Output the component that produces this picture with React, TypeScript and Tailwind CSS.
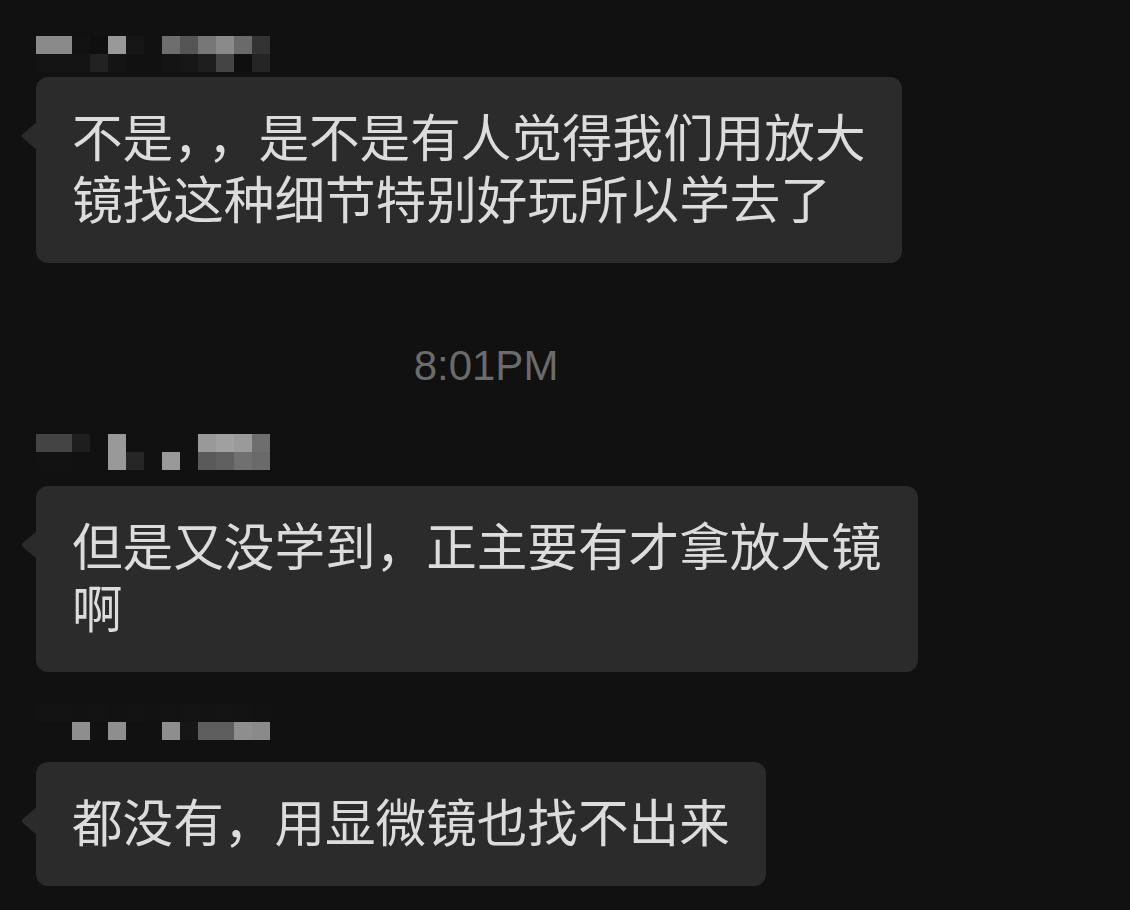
import React from "react";

const N1: string[][] = [
  ["bg-[#8a8a8a]", "bg-[#8a8a8a]", "bg-[#121212]", "bg-[#0f0f0f]", "bg-[#999999]", "bg-[#161616]", "bg-[#111111]", "bg-[#6e6e6e]", "bg-[#555555]", "bg-[#777777]", "bg-[#8a8a8a]", "bg-[#6a6a6a]", "bg-[#333333]"],
  ["bg-[#141414]", "bg-[#141414]", "bg-[#141414]", "bg-[#222222]", "bg-[#141414]", "bg-[#111111]", "bg-[#111111]", "bg-[#141414]", "bg-[#171717]", "bg-[#1e1e1e]", "bg-[#444444]", "bg-[#0f0f0f]", "bg-[#252525]"],
];
const N2: string[][] = [
  ["bg-[#444444]", "bg-[#444444]", "bg-[#1e1e1e]", "bg-[#111111]", "bg-[#999999]", "bg-[#111111]", "bg-[#111111]", "bg-[#111111]", "bg-[#111111]", "bg-[#999999]", "bg-[#a0a0a0]", "bg-[#9a9a9a]", "bg-[#6e6e6e]"],
  ["bg-[#121212]", "bg-[#121212]", "bg-[#111111]", "bg-[#111111]", "bg-[#999999]", "bg-[#262626]", "bg-[#111111]", "bg-[#999999]", "bg-[#111111]", "bg-[#5a5a5a]", "bg-[#606060]", "bg-[#707070]", "bg-[#6a6a6a]"],
];
const N3: string[][] = [
  ["bg-[#131313]", "bg-[#131313]", "bg-[#121212]", "bg-[#131313]", "bg-[#121212]", "bg-[#131313]", "bg-[#121212]", "bg-[#131313]", "bg-[#141414]", "bg-[#131313]", "bg-[#141414]", "bg-[#131313]", "bg-[#121212]"],
  ["bg-[#111111]", "bg-[#111111]", "bg-[#8e8e8e]", "bg-[#111111]", "bg-[#8e8e8e]", "bg-[#111111]", "bg-[#111111]", "bg-[#8e8e8e]", "bg-[#161616]", "bg-[#5e5e5e]", "bg-[#5e5e5e]", "bg-[#8e8e8e]", "bg-[#8a8a8a]"],
];

function Mosaic({ rows }: { rows: string[][] }) {
  return (
    <div className="flex flex-col">
      {rows.map((r, i) => (
        <div key={i} className="flex">
          {r.map((c, j) => (
            <div key={j} className={`h-[18px] w-[18px] ${c}`} />
          ))}
        </div>
      ))}
    </div>
  );
}

function Bubble({ children }: { children: React.ReactNode }) {
  return (
    <div className="relative w-fit rounded-[12px] bg-[#2b2b2b] px-[36px] pt-[27px] pb-[35px] text-[50.6px] leading-[62px] text-[#dcdcdc] whitespace-nowrap [text-spacing-trim:space-all] font-['Noto_Sans_CJK_SC','Noto_Sans',sans-serif]">
      <svg
        className="absolute left-[-15px] top-[44px]"
        width="17"
        height="30"
        viewBox="0 0 17 30"
      >
        <path d="M17 0 L1.6 13.2 Q0 15 1.6 16.8 L17 30 Z" fill="#2b2b2b" />
      </svg>
      {children}
    </div>
  );
}

export default function App() {
  return (
    <div className="min-h-[910px] w-[1130px] overflow-hidden bg-[#111111] pl-[36px] pt-[36px]">
      <Mosaic rows={N1} />
      <div className="mt-[5px]">
        <Bubble>
          不是<span className="tracking-[-16px]">，</span>，是不是有人觉得我们用放大
          <br />
          镜找这种细节特别好玩所以学去了
        </Bubble>
      </div>
      <div className="mt-[82px] flex w-[900px] justify-center font-['Liberation_Sans',Arial,sans-serif] text-[42px] leading-[42px] text-[#6b6b6b]">
        8:01PM
      </div>
      <div className="mt-[47px]">
        <Mosaic rows={N2} />
      </div>
      <div className="mt-[16px]">
        <Bubble>
          但是又没学到，正主要有才拿放大镜
          <br />
          啊
        </Bubble>
      </div>
      <div className="mt-[32px]">
        <Mosaic rows={N3} />
      </div>
      <div className="mt-[22px]">
        <Bubble>都没有，用显微镜也找不出来</Bubble>
      </div>
    </div>
  );
}
